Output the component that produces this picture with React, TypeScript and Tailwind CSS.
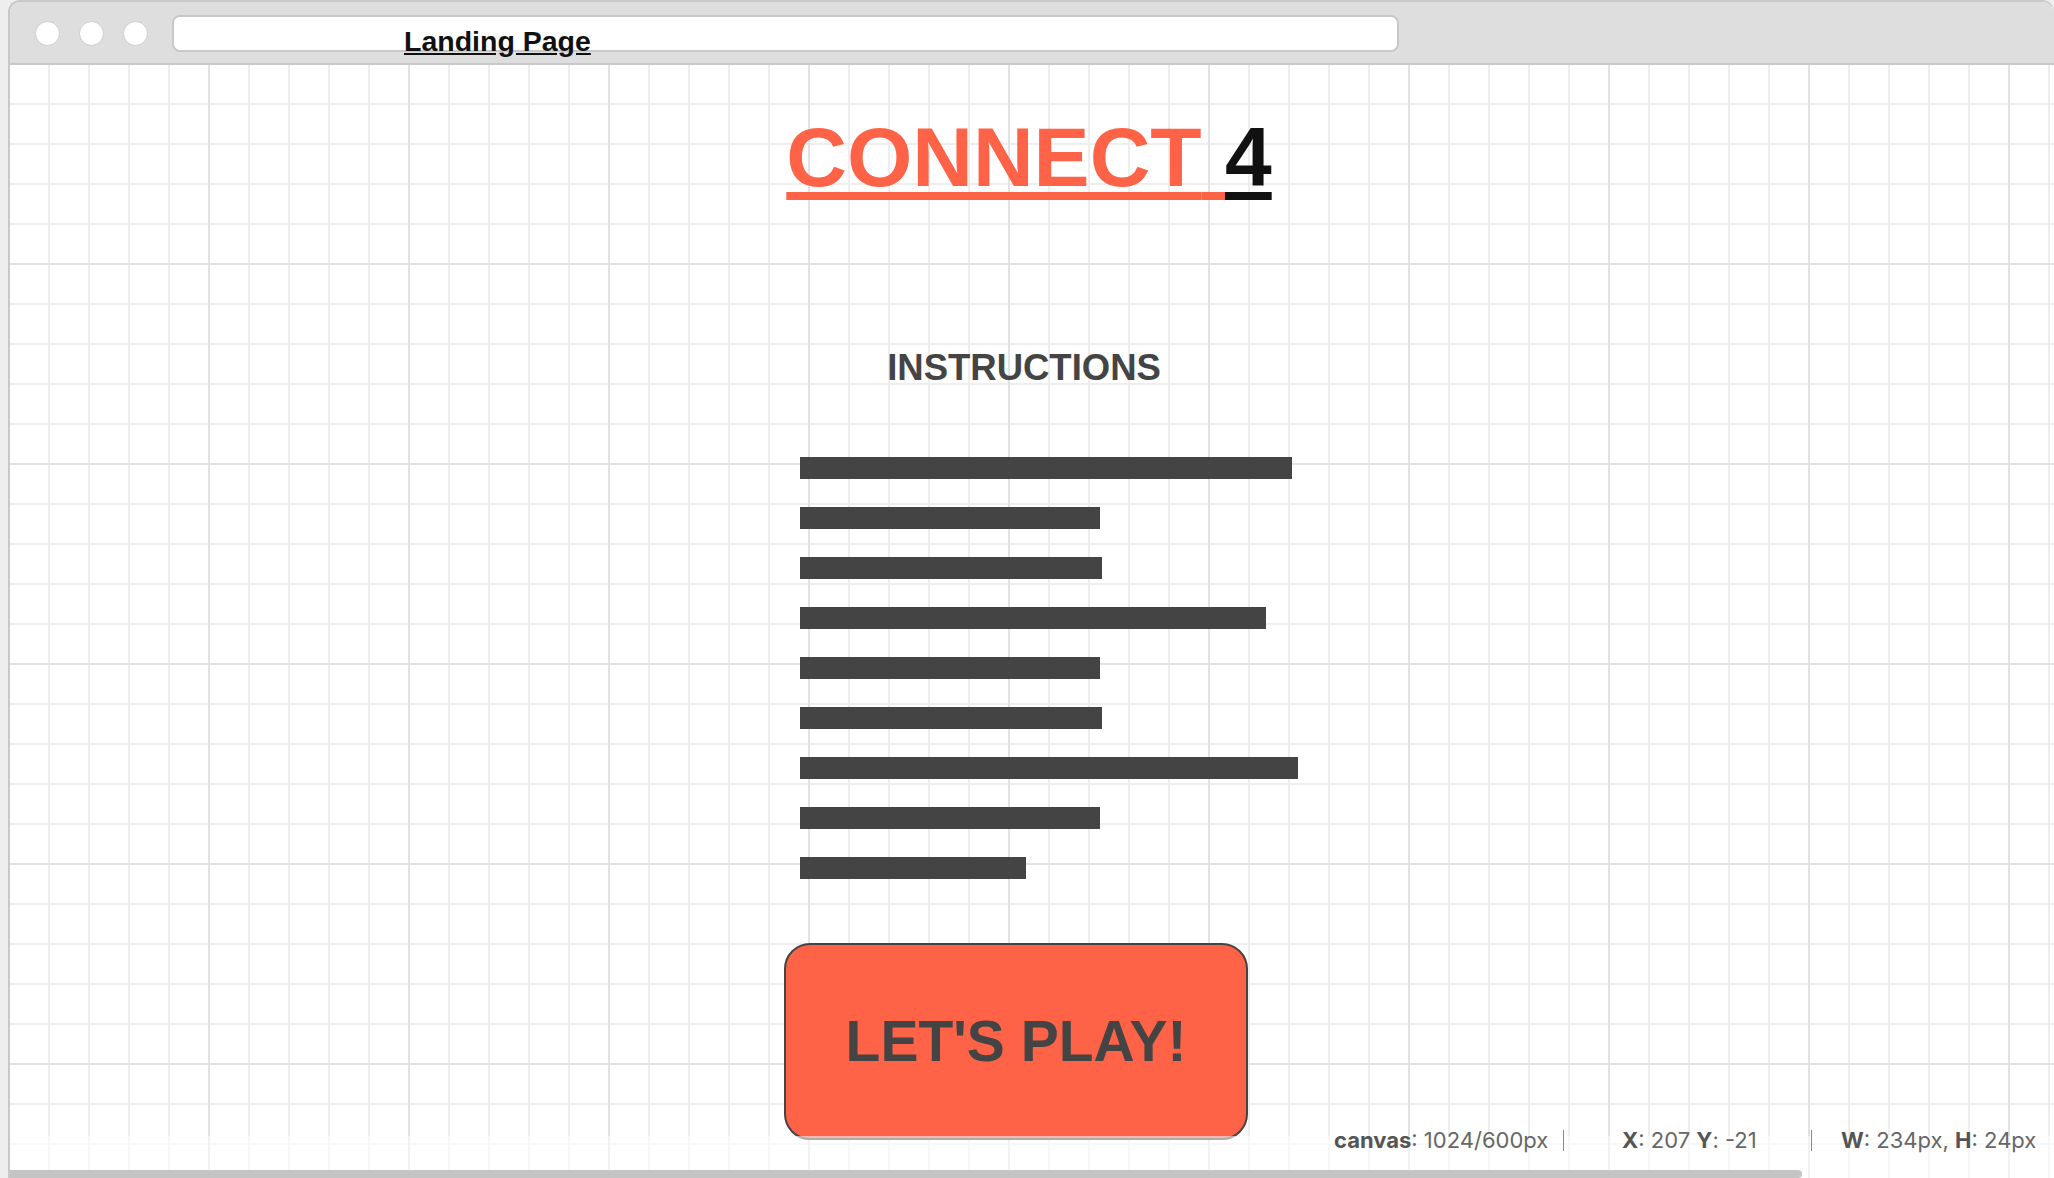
const bars = [492, 300, 302, 466, 300, 302, 498, 300, 226];

const Dot = () => (
    <div className="w-[25px] h-[25px] rounded-full bg-white border border-[#cdcdcd]" />
);

const Sep = () => <div className="w-px h-[21px] bg-[#8a8a8a]" />;

export default function App() {
    return (
        <div className="w-[2054px] h-[1178px] overflow-hidden bg-[#eeeeee] pl-[8px] font-['Liberation_Sans',Arial,sans-serif]">
            <div className="relative w-[2046px] h-full flex flex-col border-l-2 border-t-2 border-[#c8c8c8] rounded-t-[12px] overflow-hidden bg-white">
                {/* title bar */}
                <div className="h-[63px] shrink-0 flex items-center pl-[25px] pt-[2px] bg-[#dedede] border-b-2 border-[#c8c8c8]">
                    <div className="flex gap-[19px]">
                        <Dot />
                        <Dot />
                        <Dot />
                    </div>
                    <div className="ml-[24px] w-[1227px] h-[37px] bg-white border-2 border-[#c8c8c8] rounded-[8px] pl-[230px] pt-[10px]">
                        <span className="text-[28.5px] leading-none font-bold text-[#111] underline">
                            Landing Page
                        </span>
                    </div>
                </div>

                {/* canvas */}
                <div className="relative flex-1 flex flex-col items-center bg-[linear-gradient(to_right,#e2e2e2_2px,transparent_2px),linear-gradient(to_bottom,#e2e2e2_2px,transparent_2px),linear-gradient(to_right,#eeeeee_2px,transparent_2px),linear-gradient(to_bottom,#eeeeee_2px,transparent_2px)] bg-[size:200px_200px,200px_200px,40px_40px,40px_40px] bg-[position:-2px_-2px]">
                    <h1 className="mt-[50px] mr-[6px] text-[84px] leading-none font-bold">
                        <span className="text-[#ff6347] underline decoration-[8px] underline-offset-[6px]">
                            CONNECT{" "}
                        </span>
                        <span className="text-[#111] underline decoration-[8px] underline-offset-[6px]">
                            4
                        </span>
                    </h1>

                    <h2 className="mt-[151px] mr-[16px] text-[36.5px] leading-none font-bold text-[#444]">
                        INSTRUCTIONS
                    </h2>

                    <div className="mt-[70px] ml-[34px] w-[498px] flex flex-col gap-[28px]">
                        {bars.map((w, i) => (
                            <div
                                key={i}
                                className="h-[22px] bg-[#444]"
                                style={{ width: w }}
                            />
                        ))}
                    </div>

                    <button
                        type="button"
                        className="mt-[64px] mr-[32px] w-[464px] h-[197px] rounded-[26px] border-2 border-[#444] bg-[#ff6347] text-[57px] leading-none font-bold text-[#444]"
                    >
                        LET'S PLAY!
                    </button>

                    {/* status overlay */}
                    <div className="absolute left-0 right-0 bottom-0 h-[42px] bg-white/55" />
                    <div className="absolute left-[1324px] bottom-[27px] flex items-center font-['Inter',sans-serif] text-[22px] leading-none text-[#666]">
                        <div className="w-[229px]">
                            <span className="font-bold text-[#555]">canvas</span>: 1024/600px
                        </div>
                        <Sep />
                        <div className="w-[247px] pl-[58px]">
                            <span className="font-bold text-[#555]">X</span>: 207{" "}
                            <span className="font-bold text-[#555]">Y</span>: -21
                        </div>
                        <Sep />
                        <div className="pl-[29px]">
                            <span className="font-bold text-[#555]">W</span>: 234px,{" "}
                            <span className="font-bold text-[#555]">H</span>: 24px
                        </div>
                    </div>
                    <div className="absolute left-0 bottom-0 w-[1792px] h-[8px] bg-[#c4c4c4] rounded-r-full" />
                </div>
            </div>
        </div>
    );
}
